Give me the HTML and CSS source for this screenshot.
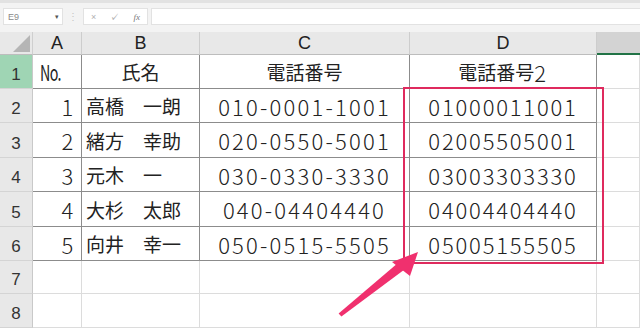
FILE: index.html
```html
<!DOCTYPE html>
<html lang="ja">
<head>
    <meta charset="UTF-8">
    <title>電話番号</title>
    <link rel="stylesheet" href="styles.css">
</head>
<body>
    <div class="page">
        <div class="toolbar">
            <div class="name-box"><span>E9</span><span class="caret">▾</span></div>
            <div class="grip">⋮</div>
            <div class="fx-box"><span>×</span><span>✓</span><span class="fx">fx</span></div>
            <div class="formula"></div>
        </div>

        <div class="sheet">
            <div class="corner"><div class="tri"></div></div>
            <div class="col-head">A</div>
            <div class="col-head">B</div>
            <div class="col-head">C</div>
            <div class="col-head">D</div>
            <div class="col-head active"></div>

            <div class="row-head sel">1</div>
            <div class="cell tb no"><span class="narrow">No.</span></div>
            <div class="cell tb center jp">氏名</div>
            <div class="cell tb center jp">電話番号</div>
            <div class="cell tb center jp">電話番号<span class="num">2</span></div>
            <div class="cell"></div>

            <div class="row-head">2</div>
            <div class="cell tb right num">1</div>
            <div class="cell tb jp">高橋　一朗</div>
            <div class="cell tb center num tel">010-0001-1001</div>
            <div class="cell tb center num">01000011001</div>
            <div class="cell"></div>

            <div class="row-head">3</div>
            <div class="cell tb right num">2</div>
            <div class="cell tb jp">緒方　幸助</div>
            <div class="cell tb center num tel">020-0550-5001</div>
            <div class="cell tb center num">02005505001</div>
            <div class="cell"></div>

            <div class="row-head">4</div>
            <div class="cell tb right num">3</div>
            <div class="cell tb jp">元木　一</div>
            <div class="cell tb center num tel">030-0330-3330</div>
            <div class="cell tb center num">03003303330</div>
            <div class="cell"></div>

            <div class="row-head">5</div>
            <div class="cell tb right num">4</div>
            <div class="cell tb jp">大杉　太郎</div>
            <div class="cell tb center num tel">040-04404440</div>
            <div class="cell tb center num">04004404440</div>
            <div class="cell"></div>

            <div class="row-head">6</div>
            <div class="cell tb right num">5</div>
            <div class="cell tb jp">向井　幸一</div>
            <div class="cell tb center num tel">050-0515-5505</div>
            <div class="cell tb center num">05005155505</div>
            <div class="cell"></div>

            <div class="row-head">7</div>
            <div class="cell"></div>
            <div class="cell"></div>
            <div class="cell"></div>
            <div class="cell"></div>
            <div class="cell"></div>

            <div class="row-head">8</div>
            <div class="cell"></div>
            <div class="cell"></div>
            <div class="cell"></div>
            <div class="cell"></div>
            <div class="cell"></div>
        </div>

        <!-- annotation -->
        <div class="highlight"></div>
        <svg class="arrow" width="640" height="328" viewBox="0 0 640 328">
            <polygon points="338.6,313.4 341.4,316.6 404.5,269.5 398.5,262.5" fill="#f0306e"/>
            <polygon points="418,252 392,262 410,276" fill="#f0306e"/>
        </svg>
    </div>
</body>
</html>
```

FILE: styles.css
```css
body {
    margin: 0;
    font-family: "Liberation Sans", Arial, sans-serif;
    background-color: white;
    color: #222;
}

.page {
    position: relative;
    width: 640px;
    height: 328px;
    overflow: hidden;
}

.toolbar {
    height: 32px;
    box-sizing: border-box;
    border-top: 3px solid #e2e2e2;
    background-color: #f3f3f3;
    display: flex;
    align-items: flex-start;
    padding-top: 5px;
}

.name-box {
    margin-left: 3px;
    width: 60px;
    height: 17px;
    box-sizing: border-box;
    background-color: white;
    border: 1px solid #e2e2e2;
    display: flex;
    justify-content: space-between;
    align-items: center;
    padding: 0 3px 0 4px;
    font-size: 9px;
    color: #8a8a8a;
}

.caret {
    font-size: 7px;
    color: #555;
}

.grip {
    width: 20px;
    text-align: center;
    font-size: 10px;
    line-height: 17px;
    color: #c4c4c4;
}

.fx-box {
    width: 65px;
    height: 17px;
    box-sizing: border-box;
    background-color: white;
    border: 1px solid #e2e2e2;
    display: flex;
    justify-content: space-around;
    align-items: center;
    font-size: 9px;
    color: #b0b0b0;
}

.fx-box .fx {
    font-family: "Liberation Serif", serif;
    font-style: italic;
    color: #777;
}

.formula {
    flex: 1;
    margin-left: 3px;
    height: 17px;
    box-sizing: border-box;
    background-color: white;
    border: 1px solid #e2e2e2;
    border-right: none;
}

.sheet {
    display: grid;
    grid-template-columns: 33px 49px 118px 210px 187px 43px;
    grid-template-rows: 23px 34px 34px 35px 34px 35px 34px 33px 34px;
}

.corner {
    background-color: #e8e8e8;
    border-right: 1px solid #cfcfcf;
    border-bottom: 1px solid #bdbdbd;
    box-sizing: border-box;
    display: flex;
    justify-content: flex-end;
    align-items: flex-end;
    padding: 0 2px 2px 0;
}

.tri {
    width: 0;
    height: 0;
    border-left: 17px solid transparent;
    border-bottom: 17px solid #b5b5b5;
}

.col-head {
    background-color: #e8e8e8;
    border-right: 1px solid #cdcdcd;
    border-bottom: 1px solid #bdbdbd;
    box-sizing: border-box;
    text-align: center;
    font-size: 18px;
    line-height: 22px;
    color: #222;
}

.col-head.active {
    background-color: #d3d3d3;
    border-bottom: 2px solid #217346;
    border-right: none;
}

.row-head {
    background-color: #e8e8e8;
    border-right: 1px solid #c9c9c9;
    border-bottom: 1px solid #d4d4d4;
    box-sizing: border-box;
    display: flex;
    justify-content: center;
    align-items: flex-end;
    padding-bottom: 3px;
    font-size: 17px;
    color: #333;
}

.row-head.sel {
    background-color: #9fd5b4;
}

.cell {
    border-right: 1px solid #dcdcdc;
    border-bottom: 1px solid #dcdcdc;
    box-sizing: border-box;
    display: flex;
    align-items: center;
    white-space: nowrap;
    font-family: "Noto Sans CJK JP", sans-serif;
    color: #222;
}

.cell.tb {
    border-right-color: #8c8c8c;
    border-bottom-color: #8c8c8c;
}

.center {
    justify-content: center;
}

.right {
    justify-content: flex-end;
    padding-right: 6px;
}

.jp {
    font-size: 19px;
    padding-left: 4px;
}

.jp.center {
    padding-left: 0;
}

.num {
    font-family: "Noto Sans CJK JP", sans-serif;
    font-size: 22px;
    font-weight: 300;
    letter-spacing: 1.8px;
}

.tel {
    letter-spacing: 2.2px;
}

.no {
    padding-left: 7px;
}

.narrow {
    display: inline-block;
    font-size: 21px;
    transform: scaleX(0.68);
    transform-origin: left center;
    letter-spacing: -1px;
}

.highlight {
    position: absolute;
    left: 403px;
    top: 87px;
    width: 201px;
    height: 177px;
    box-sizing: border-box;
    border: 2px solid #df2a5e;
}

.arrow {
    position: absolute;
    left: 0;
    top: 0;
}
```
